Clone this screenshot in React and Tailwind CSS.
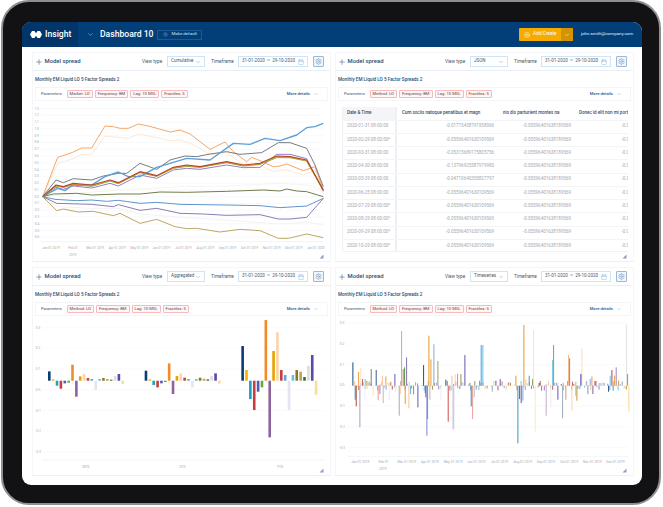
import React from 'react';
import { Plus, ChevronDown, Calendar, Settings, CirclePlus } from 'lucide-react';

const C = {
  navy: '#0b3c73', amber: '#f0b400', teal: '#1f9fc4', red: '#c4403f', indigo: '#4f5db0', green: '#6aa83c',
  orange: '#f28a2a', purple: '#8e63a0', gold: '#e6a200', peach: '#fdd3a8', blue: '#5da3dd', lav: '#e8e2f3',
  sky: '#5cc0ea', olive: '#8a7a1f', khaki: '#b0a860', moss: '#3f6b2a', gray: '#dddde3', violet: '#5a48a8', pale: '#fbdc9a',
};

const lines = [
  { c: '#fde3cc', w: 2.5, d: '68,260 113,160 158,147 185,133 215,133 255,78 325,85 355,72 415,84 450,93 480,90 510,100 540,115 570,135 615,125 680,170 720,165 760,185 800,180 850,195 885,180 910,250' },
  { c: '#f4a768', w: 3, d: '68,260 113,142 135,135 158,127 185,114 215,114 255,48 280,50 300,55 325,55 355,42 385,48 415,56 450,66 480,60 510,72 540,95 570,118 615,96 640,125 680,155 695,142 720,152 760,170 780,168 800,162 850,182 885,170 910,240' },
  { c: '#f3f1f6', w: 3, d: '68,260 110,290 215,295 295,295 360,312 480,322 620,330 775,342 860,336 910,345' },
  { c: '#f6f4ee', w: 3, d: '68,260 170,250 300,240 480,230 620,228 780,220 860,225 910,240' },
  { c: '#777b80', w: 3, d: '68,260 108,210 130,218 160,206 215,210 250,198 295,190 320,190 360,160 410,178 450,150 495,138 530,140 570,132 620,125 660,133 725,128 775,98 810,98 860,115 885,165 910,230' },
  { c: '#9c7cc0', w: 3, d: '68,260 108,232 130,238 160,228 215,234 270,220 295,228 360,195 410,205 460,180 500,175 540,178 620,165 670,173 720,172 770,133 810,133 860,146 910,244' },
  { c: '#5d9fd8', w: 4, d: '68,260 113,235 135,242 158,225 215,225 255,200 295,186 325,200 360,200 410,172 450,160 500,145 570,150 640,100 690,103 735,85 780,92 830,75 860,53 885,50 910,40' },
  { c: '#6aa83c', w: 3, d: '68,260 108,228 130,232 160,224 215,229 270,213 295,221 360,188 410,199 460,175 500,169 540,172 620,158 670,168 720,163 770,143 810,143 860,153 910,242' },
  { c: '#f2a21e', w: 3, d: '68,260 108,227 130,232 160,222 215,227 270,212 295,220 360,187 410,198 460,174 500,167 540,171 620,157 670,166 720,162 770,140 810,142 860,152 910,241' },
  { c: '#b5482c', w: 3.5, d: '68,260 108,225 130,230 160,220 215,225 270,210 295,218 360,185 410,197 460,172 500,165 540,170 620,155 670,165 720,160 770,138 810,140 860,150 910,240' },
  { c: '#6f7d4a', w: 3, d: '68,260 100,252 170,250 215,255 300,252 360,252 420,246 500,247 620,244 730,240 780,243 800,237 830,243 860,245 910,260' },
  { c: '#5f95cc', w: 3, d: '68,260 105,268 170,272 215,270 260,274 295,271 360,280 410,277 480,283 620,285 720,287 780,293 860,288 910,265' },
  { c: '#8a7db4', w: 3, d: '68,260 110,280 215,283 280,290 295,284 360,301 410,295 480,310 550,312 620,316 720,314 775,327 810,327 860,322 910,265' },
  { c: '#bda763', w: 3, d: '68,260 110,302 130,297 175,306 220,304 280,317 300,310 360,340 410,328 465,350 500,356 530,355 600,366 660,358 720,362 775,385 805,385 860,372 910,383' },
];

const monthLabels = ['Jan 01 2019', 'Feb 01', 'Mar 01 2019', 'Apr 01 2019', 'May 01 2019', 'Jun 01 2019', 'Jul 01 2019', 'Aug 01 2019', 'Sep 01 2019', 'Oct 01 2019', 'Nov 01 2019', 'Dec 01 2019', 'Jan 01 2020'];

const groupColors = [C.navy, C.amber, C.teal, C.red, C.indigo, C.green, C.orange, C.purple, C.gold, C.peach, C.red, C.blue, C.lav, C.sky, C.olive, C.khaki, C.moss, C.gray, C.violet, C.pale];
const groups = [
  { x: 84, v: [28, 4, -15, -24, -8, -6, 48, -48, 13, 20, 8, 5, -28, 5, 8, 5, 3, 14, 20, -10] },
  { x: 374, v: [30, 4, -13, -20, -8, -4, 52, -40, 14, 22, 9, 5, -20, 5, 9, 6, 4, 14, 22, -9] },
  { x: 664, v: [104, 32, -55, -88, -33, -20, 182, -170, 89, 145, 32, 17, -88, 17, 32, 27, 11, 45, 77, -42] },
];

const seriesBars = [
  [207, 164, '#8cc4e0'], [222, 85, '#8e7db8'], [289, 150, '#eda33c'], [304, 124, '#8fb0dc'], [295, 79, '#eda33c'], [316, 74, '#a9a868'], [397, 92, '#7468b8'],
  [446, 122, '#5da3dd'], [451, 122, '#6cc8f0'], [574, 182, '#eda33c'], [603, 167, '#e8e8ea'], [663, 122, '#a9a05c'], [660, 77, '#7fcbe8'], [708, 92, '#f8b98a'], [711, 82, '#d8836c'],
  [748, 112, '#fbe3b4'], [882, 182, '#e4e4e6'], [61, 70, '#2d5f94'],
  [78, 41, '#f2a65a'], [85, 52, '#fddcb8'], [90, 20, '#c96a6a'], [98, 20, '#7fcbe8'], [103, 15, '#a9a868'], [116, 50, '#7d8aa0'], [131, 47, '#4a6d96'], [150, 30, '#fbc99a'], [160, 28, '#f2a65a'],
  [175, 12, '#eda33c'], [187, 35, '#7468b8'], [212, 50, '#d8836c'], [216, 55, '#6a9a4c'], [273, 62, '#2d5f94'], [340, 18, '#2d5f94'], [358, 30, '#fbc99a'], [368, 35, '#fbd8b4'], [375, 36, '#8fb0dc'],
  [385, 35, '#a9a05c'], [412, 8, '#6a9a4c'], [441, 15, '#d8836c'], [490, 15, '#7468b8'], [503, 20, '#8e6aa0'], [550, 30, '#eda33c'], [580, 18, '#fbc99a'], [590, 30, '#5aa8b8'], [600, 20, '#a9a05c'],
  [620, 8, '#2d5f94'], [640, 5, '#fbc99a'], [692, 8, '#eda33c'], [720, 12, '#c96a6a'], [745, 35, '#5a48a8'], [760, 8, '#fbd8b4'], [773, 20, '#8fb0dc'], [778, 28, '#f2a65a'], [790, 14, '#b05a5a'],
  [800, 8, '#7fcbe8'], [815, 8, '#8fb0dc'], [833, 30, '#7fcbe8'], [838, 47, '#b05a5a'], [846, 30, '#f2a65a'], [851, 55, '#a391c4'], [858, 15, '#eda33c'], [885, 35, '#a391c4'],
  [68, -42, '#4f93c4'], [71, -62, '#b05a4a'], [82, -125, '#b7a2c4'], [97, -45, '#f4f1f8'], [122, -30, '#fbe3b4'], [137, -44, '#e8a49a'], [142, -25, '#a88fb4'], [152, -52, '#c5bccd'], [170, -43, '#eeeaf4'],
  [190, -18, '#fbe3b4'], [200, -90, '#a4b4c4'], [204, -25, '#fbd8b4'], [218, -55, '#eda33c'], [229, -68, '#fbc99a'], [234, -25, '#6cc0dc'], [243, -26, '#c98a5a'], [256, -65, '#7468b8'],
  [278, -22, '#4f93c4'], [280, -35, '#b05a4a'], [285, -100, '#7aa860'], [283, -150, '#8a8fdc'], [292, -42, '#c5bccd'], [325, -45, '#f0ecf6'], [347, -108, '#d0605a'], [352, -15, '#a88fb4'],
  [362, -130, '#b7a2d4'], [365, -135, '#eeeaf4'], [416, -62, '#4f93b4'], [420, -100, '#e8aaa4'], [425, -35, '#c5bccd'], [431, -12, '#8fb0dc'], [479, -18, '#9cb4cc'], [556, -173, '#4f9fc4'],
  [561, -40, '#b05a4a'], [566, -52, '#7468a8'], [571, -45, '#8fb0dc'], [608, -138, '#fdeacb'], [627, -15, '#8e8ab4'], [641, -90, '#c5b4d4'], [655, -65, '#f0ecf6'], [676, -42, '#7468b8'],
  [690, -98, '#a4b4c4'], [700, -42, '#d8a090'], [718, -75, '#fbd8b4'], [733, -45, '#e09a3c'], [730, -30, '#a4c48a'], [766, -25, '#7fa4c4'], [781, -25, '#8e6aa0'], [828, -18, '#2d5f94'], [842, -15, '#6a9ac4'], [889, -78, '#fbdc9a'],
];

// short bars around the zero line, between the tall ones
const fillerColors = ['#8fb0dc', '#fbc99a', '#a9a05c', '#c96a6a', '#7fcbe8', '#a391c4'];
const fillerBars = [];
for (let g = 0; g < 12; g++) {
  for (let i = 0; i < 10; i++) {
    const h = Math.round(Math.sin(g * 3.1 + i * 1.7) * 14);
    fillerBars.push([60 + g * 69.6 + i * 6.2, h, fillerColors[(g + i) % 6]]);
  }
}

const tableRows = [
  ['2020-01-31 08:00:00', '-0.01715438791958066', '-0.05596401638189569'],
  ['2020-02-29 08:00:00*', '-0.05596401630109569', '-0.05596401638189569'],
  ['2020-03-31 08:00:00', '-0.05315689175805756', '-0.05596401638189569'],
  ['2020-04-30 08:00:00', '-0.13796925587979980', '-0.05596401638189569'],
  ['2020-05-29 08:00:00', '-0.04710640355827797', '-0.05596401638189569'],
  ['2020-06-25 08:00:00', '-0.05596401630109569', '-0.05596401638189569'],
  ['2020-07-29 08:00:00*', '-0.05596401630109569', '-0.05596401638189569'],
  ['2020-08-29 08:00:00*', '-0.05596401630109569', '-0.05596401638189569'],
  ['2020-09-29 08:00:00*', '-0.05596401630109569', '-0.05596401638189569'],
  ['2020-10-29 08:00:00*', '-0.05596401630109569', '-0.05596401638189569'],
];

const ResizeHandle = () => (
  <svg width="5" height="5" viewBox="0 0 5 5" className="block">
    <path d="M4.5 0.5V4.5H0.5Z" fill="#8aa2bc" />
  </svg>
);

const Panel = ({ viewType, params, children }) => (
  <div className="relative flex flex-col border border-[#f4f6fa] border-b-[#edf1f7]">
    <div className="flex items-center h-[18px] border-b border-[#e8eff7] pl-[2px] whitespace-nowrap">
      <Plus size={8} strokeWidth={1.5} className="text-[#2a4d74] shrink-0" />
      <span className="ml-[1.5px] text-[5.9px] font-medium text-[#2a4d74] w-[97.5px]">Model spread</span>
      <span className="text-[4.7px] text-[#44586e] w-[25px]">View type</span>
      <div className="w-[38px] h-[11px] border border-[#cfe5f5] flex items-center justify-between px-[3px] text-[4.5px] text-[#44586e]">
        {viewType}
        <ChevronDown size={6} className="text-[#7aa7cc]" />
      </div>
      <span className="ml-[6px] text-[4.7px] text-[#44586e] w-[27px]">Timeframe</span>
      <div className="w-[70px] h-[11px] border border-[#cfe5f5] flex items-center justify-between px-[3px] text-[4.5px] text-[#44586e]">
        <span>31-01-2020 &nbsp;~&nbsp; 29-10-2020</span>
        <Calendar size={6} className="text-[#8dbbe0]" />
      </div>
      <div className="ml-[5px] w-[11px] h-[11px] border border-[#9db8d4] bg-[#f2f6fb] rounded-[1px] flex items-center justify-center">
        <Settings size={7} className="text-[#6f9cc6]" />
      </div>
    </div>
    <div className="pl-[2px] pt-[5px] h-[16px] text-[4.6px] font-medium text-[#2a4d74] leading-[7px] whitespace-nowrap">Monthly EM Liquid LO 5 Factor Spreads 2</div>
    <div className="mx-[2px] h-[14px] border border-[#f3f5f9] flex items-center pl-[5px] pr-[8px] text-[4px] text-[#44586e] whitespace-nowrap">
      <span className="mr-[4px]">Parameters:</span>
      {params.map((p) => (
        <span key={p} className="mr-[2px] h-[7.5px] px-[2px] flex items-center bg-[#fff5f5] border border-[#f8baba] rounded-[1px] text-[4.2px] text-[#5a4a50]">{p}</span>
      ))}
      <span className="ml-auto text-[4.2px] text-[#2a5a90] font-medium">More details</span>
      <ChevronDown size={6} className="ml-[3px] text-[#8dbbe0]" />
    </div>
    {children}
    <div className="absolute right-[6px] bottom-[2px]"><ResizeHandle /></div>
  </div>
);

const LineChart = () => {
  const labels = [];
  for (let i = 13; i >= -6; i--) labels.push(i);
  return (
    <svg viewBox="39 -27 891 480" className="block w-[297px] flex-1 min-h-0">
      {labels.map((i) => {
        const y = 260 - i * 20.33;
        return (
          <g key={i}>
            <line x1="62" x2="910" y1={y} y2={y} stroke="#f1f3f6" strokeWidth="1.5" />
            <text x="50" y={y + 3} fontSize="9.5" fill="#a3aab3" textAnchor="middle" fontFamily="Roboto, sans-serif">{(i / 10).toFixed(1)}</text>
          </g>
        );
      })}
      <line x1="62" x2="910" y1="395" y2="395" stroke="#e3e7ec" strokeWidth="1.5" />
      {lines.map((l, i) => (
        <polyline key={i} points={l.d} fill="none" stroke={l.c} strokeWidth={l.w} strokeLinejoin="round" />
      ))}
      {monthLabels.map((m, i) => (
        <text key={m} x={93 + i * 66.2} y="416" fontSize="9.5" fill="#a3aab3" textAnchor="middle" fontFamily="Roboto, sans-serif">{m}</text>
      ))}
      <text x="158" y="437" fontSize="9.5" fill="#a3aab3" textAnchor="middle" fontFamily="Roboto, sans-serif">2019</text>
    </svg>
  );
};

const yTicks = [0.3, 0.2, 0.1, 0, -0.1, -0.2, -0.3];

const AggregatedChart = () => (
  <svg viewBox="33 316 297 159" className="block w-[297px] flex-1 min-h-0">
    {yTicks.map((t, i) => {
      const y = 327.7 + i * 20.7;
      return (
        <g key={t}>
          <line x1="42" x2="324" y1={y} y2={y} stroke="#f2f4f7" strokeWidth="0.5" />
          <text x="38" y={y + 1} fontSize="3.3" fill="#a3aab3" textAnchor="middle" fontFamily="Roboto, sans-serif">{t.toFixed(1)}</text>
        </g>
      );
    })}
    <line x1="42" x2="324" y1="460" y2="460" stroke="#e3e7ec" strokeWidth="0.5" />
    {groups.map((g) =>
      g.v.map((h, i) => (
        <rect
          key={g.x + '-' + i}
          x={20 + (g.x + i * 11.6) / 3}
          y={h > 0 ? 380.7 - h / 3 : 380.7}
          width="2.6"
          height={Math.abs(h) / 3}
          fill={groupColors[i]}
        />
      ))
    )}
    {[['MTD', 198], ['STD', 488], ['YTD', 780]].map(([t, x]) => (
      <text key={t} x={20 + x / 3} y="467.5" fontSize="3.3" fill="#a3aab3" textAnchor="middle" fontFamily="Roboto, sans-serif">{t}</text>
    ))}
  </svg>
);

const TimeseriesChart = () => (
  <svg viewBox="336 316 297 159" className="block w-[297px] flex-1 min-h-0">
    {yTicks.map((t, i) => {
      const y = 323.3 + i * 20.7;
      return (
        <g key={t}>
          <line x1="347" x2="628" y1={y} y2={y} stroke="#f2f4f7" strokeWidth="0.5" />
          <text x="342" y={y + 1} fontSize="3.3" fill="#a3aab3" textAnchor="middle" fontFamily="Roboto, sans-serif">{t.toFixed(1)}</text>
        </g>
      );
    })}
    <line x1="347" x2="628" y1="456.3" y2="456.3" stroke="#e3e7ec" strokeWidth="0.5" />
    {fillerBars.concat(seriesBars).map(([x, h, c], i) => (
      <rect key={i} x={332 + x / 3} y={h > 0 ? 385.7 - h / 3 : 385.7} width="1.1" height={Math.abs(h) / 3} fill={c} />
    ))}
    {monthLabels.slice(0, 12).map((m, i) => (
      <text key={m} x={332 + (85 + i * 69.6) / 3} y="463" fontSize="3.3" fill="#a3aab3" textAnchor="middle" fontFamily="Roboto, sans-serif">{m}</text>
    ))}
    <text x={332 + 153 / 3} y="470" fontSize="3.3" fill="#a3aab3" textAnchor="middle" fontFamily="Roboto, sans-serif">2019</text>
  </svg>
);

const DataTable = () => (
  <div className="ml-[6px] mt-[6px] w-[286px] h-[145px] overflow-hidden border-l border-b border-[#f0f2f6] text-[4.5px]">
    <div className="grid grid-cols-[54px_102px_77px_53px] h-[12.5px] items-center font-medium text-[#3d4c5e] text-[4.5px] whitespace-nowrap">
      <div className="h-full flex items-center pl-[4px] bg-[#f3f5f8] border-r-2 border-[#eef0f4]">Date &amp; Time</div>
      <div className="pl-[5px]">Cum sociis natoque penatibus et magn</div>
      <div className="pl-[4px]">nis dis parturient montes na</div>
      <div className="pl-[3px]">Donec id elit non mi port</div>
    </div>
    {tableRows.map((r) => (
      <div key={r[0]} className="grid grid-cols-[54px_102px_77px_53px] h-[13.25px] items-center border-t border-[#f3f4f7] text-[#a3a9b1]">
        <div className="h-full flex items-center pl-[4px] border-r-2 border-[#eef0f4] whitespace-nowrap">{r[0]}</div>
        <div className="text-right pr-[5px]">{r[1]}</div>
        <div className="text-right pr-[5px]">{r[2]}</div>
        <div className="text-right">-0.0</div>
      </div>
    ))}
  </div>
);

const methodParams = ['Method: LO', 'Frequency: BM', 'Lag: 10 MSL', 'Fractiles: 5'];

const App = () => (
  <div className="w-[663px] h-[507px] bg-white font-['Roboto',sans-serif]">
    <div className="ml-[1px] w-[660px] h-[505px] bg-[#121114] rounded-[28px] border-2 border-[#8f8f92] pt-[20px] pl-[19px] pr-[17px] pb-[18px]">
      <div className="h-full bg-white rounded-[9px] overflow-hidden flex flex-col">
        {/* Top bar */}
        <header className="h-[25px] bg-[#023f79] flex items-center text-white shrink-0 whitespace-nowrap">
          <div className="w-[56px] h-full bg-[#02366a] flex items-center pl-[8px]">
            <svg width="12" height="7" viewBox="0 0 12 7" fill="#fff">
              <path d="M2 0 H4.5 L6 2.2 L7.5 0 H10 L12 3.5 L10 7 H7.5 L6 4.8 L4.5 7 H2 L0 3.5Z" />
            </svg>
            <span className="ml-[3px] text-[8.6px] font-medium">Insight</span>
          </div>
          <ChevronDown size={7} className="ml-[9px] text-[#9fc0e0]" />
          <span className="ml-[6px] text-[8.6px] font-medium">Dashboard 10</span>
          <div className="ml-[4px] w-[45px] h-[10px] border border-[#1d5a94] flex items-center pl-[5px] text-[4.4px] text-[#d6e4f2]">
            <Settings size={5} className="mr-[3px] text-[#6d9ac6]" />
            Make default
          </div>
          <div className="ml-auto flex h-[13px] w-[54px] bg-[#f6ab00] rounded-[1px] text-[4.6px]">
            <div className="flex-1 flex items-center pl-[5px]">
              <CirclePlus size={6} className="mr-[3px]" />
              Add/Create
            </div>
            <div className="w-[12px] bg-[#d49400] flex items-center justify-center">
              <ChevronDown size={6} />
            </div>
          </div>
          <span className="ml-[8px] w-[53px] mr-[8px] text-[4.4px] text-[#e4edf6]">john.smith@company.com</span>
        </header>

        {/* Dashboard panels */}
        <main className="flex-1 min-h-0 grid grid-cols-[299px_299px] grid-rows-[210px_209px] gap-x-[4px] gap-y-[5px] pt-[5px] pl-[10px]">
          <Panel viewType="Cumulative" params={['Market: LO', 'Frequency: BM', 'Lag: 10 MSL', 'Fractiles: 5']}>
            <LineChart />
          </Panel>
          <Panel viewType="JSON" params={methodParams}>
            <DataTable />
          </Panel>
          <Panel viewType="Aggregated" params={methodParams}>
            <AggregatedChart />
          </Panel>
          <Panel viewType="Timeseries" params={methodParams}>
            <TimeseriesChart />
          </Panel>
        </main>
      </div>
    </div>
  </div>
);

export default App;
